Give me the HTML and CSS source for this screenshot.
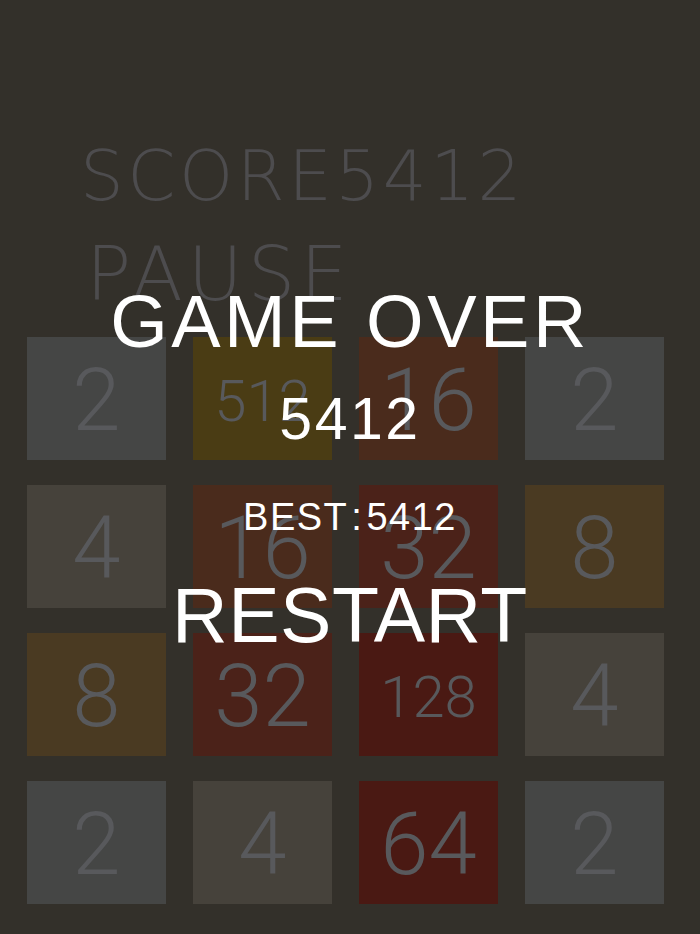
FILE: index.html
```html
<!DOCTYPE html>
<html>
<head>
<meta charset="utf-8">
<link rel="stylesheet" href="styles.css">
</head>
<body>
<div class="page">
  <div class="header">
    <div class="score"><span>SCORE</span><span>5412</span></div>
    <div class="pause">PAUSE</div>
  </div>
  <div class="board">
    <div class="tile t2">2</div>
    <div class="tile t512 small">512</div>
    <div class="tile t16">16</div>
    <div class="tile t2">2</div>

    <div class="tile t4">4</div>
    <div class="tile t16">16</div>
    <div class="tile t32">32</div>
    <div class="tile t8">8</div>

    <div class="tile t8">8</div>
    <div class="tile t32">32</div>
    <div class="tile t128 small">128</div>
    <div class="tile t4">4</div>

    <div class="tile t2">2</div>
    <div class="tile t4">4</div>
    <div class="tile t64">64</div>
    <div class="tile t2">2</div>
  </div>
  <div class="overlay">
    <div class="over">GAME OVER</div>
    <div class="final">5412</div>
    <div class="best">BEST<span class="colon">:</span>5412</div>
    <div class="restart">RESTART</div>
  </div>
</div>
</body>
</html>
```

FILE: styles.css
```css
html, body {
  margin: 0;
  padding: 0;
  background: #33302a;
}
body {
  font-family: "Liberation Sans", Arial, sans-serif;
}
.page {
  position: relative;
  width: 700px;
  height: 934px;
  overflow: hidden;
  background: #33302a;
}
.header {
  padding-top: 141px;
  padding-left: 80px;
  color: #4d4c4e;
  font-family: "DejaVu Sans", "Liberation Sans", sans-serif;
  font-weight: 200;
}
.score {
  font-size: 69px;
  line-height: 70px;
  height: 70px;
  letter-spacing: 3.5px;
  margin-bottom: 26px;
  white-space: nowrap;
}
.pause {
  font-size: 75px;
  line-height: 74px;
  height: 74px;
  letter-spacing: 5px;
  margin-bottom: 26px;
  padding-left: 6px;
}
.board {
  display: grid;
  grid-template-columns: repeat(4, 139px);
  grid-auto-rows: 123px;
  column-gap: 27px;
  row-gap: 25px;
  padding-left: 27px;
}
.tile {
  display: flex;
  align-items: center;
  justify-content: center;
  color: #58595c;
  font-family: Roboto, "Liberation Sans", sans-serif;
  font-weight: 300;
  font-size: 87px;
  line-height: 1;
  padding-top: 4px;
  box-sizing: border-box;
}
.tile.small {
  font-size: 58px;
}
.t2 { background: #454645; }
.t4 { background: #46423b; }
.t8 { background: #4a3a22; }
.t16 { background: #4a2b1c; }
.t32 { background: #4b2219; }
.t64 { background: #4a1913; }
.t128 { background: #4a1913; }
.t512 { background: #4a3c14; }

.overlay {
  position: absolute;
  left: 0;
  top: 0;
  width: 700px;
  display: flex;
  flex-direction: column;
  align-items: center;
  color: #ffffff;
  padding-top: 285px;
}
.overlay div {
  white-space: nowrap;
}
.over {
  font-size: 74px;
  line-height: 74px;
  height: 74px;
  letter-spacing: 3.5px;
}
.final {
  font-size: 59px;
  line-height: 59px;
  height: 59px;
  margin-top: 31px;
  letter-spacing: 2.5px;
}
.best {
  font-size: 38px;
  line-height: 38px;
  height: 38px;
  margin-top: 49px;
  letter-spacing: 1.5px;
}
.colon {
  padding: 0 3px;
}
.restart {
  font-size: 77px;
  line-height: 77px;
  height: 77px;
  margin-top: 41px;
  letter-spacing: 0.5px;
}
```
